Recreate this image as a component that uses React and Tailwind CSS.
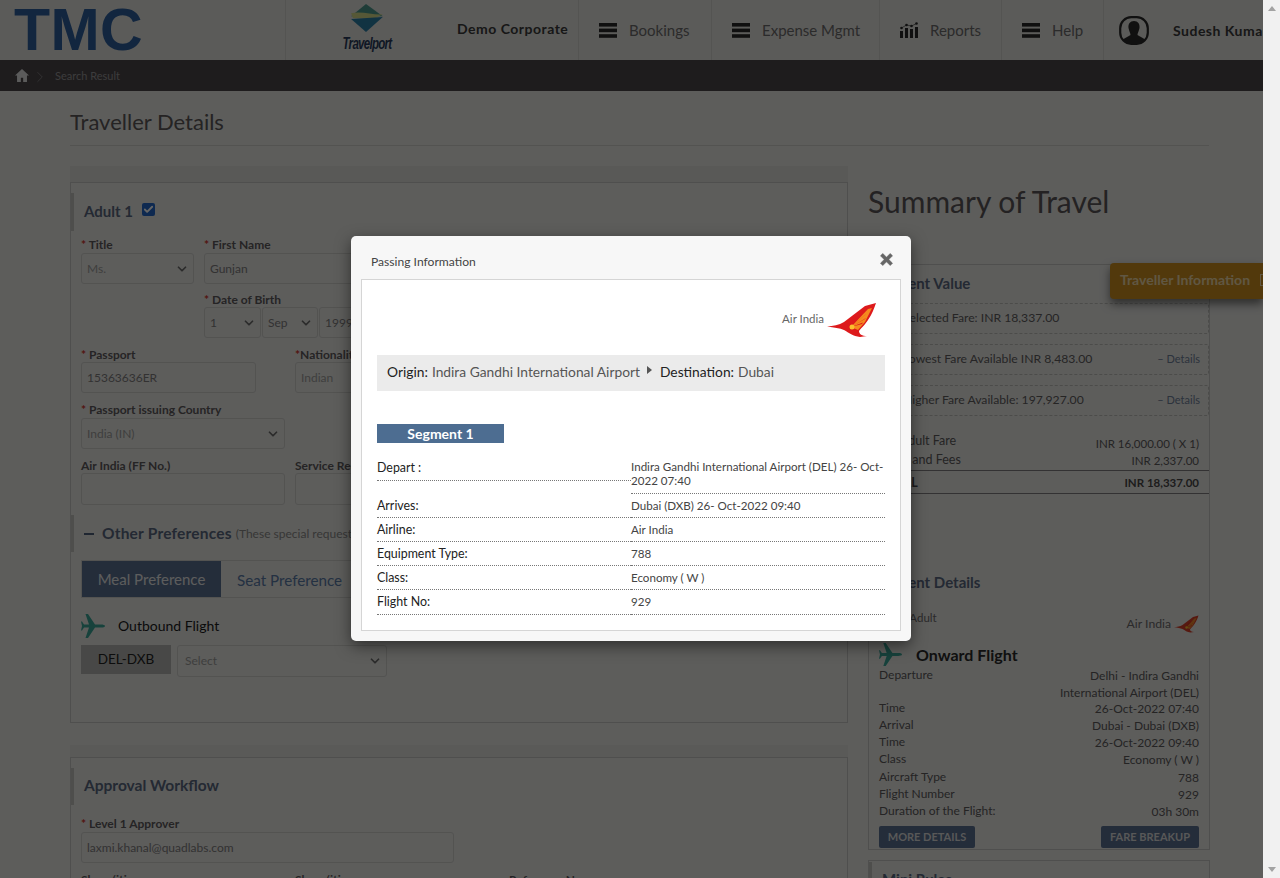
import React from "react";
import { Check, ChevronDown, ChevronRight } from "lucide-react";

const font = { fontFamily: "Lato, 'Noto Sans', sans-serif" };

function Wing({ className, faded }) {
  return (
    <svg viewBox="0 0 50 34" className={className}>
      <path d="M49 0 L38 3 L17 19 C12 22 6 23 0 23.5 C7 24.5 13 25 17 27 C22 30 26 33 33 34 L40 33 C35 33 32 31 32 28 C33 26 38 22 41 17 C45 11 47 6 49 0Z" fill={faded ? "#d8402a" : "#dd1a1c"} />
      <path d="M24 24 L41 6 L45 5 L38 19 L31 27Z" fill={faded ? "#ee8a2c" : "#f58a1f"} />
      <path d="M24 24 L33 12 L35 11Z M24 24 L38 12 L39 11Z M24 24 L38 16 L39 15Z M24 24 L35 21 L36 19.5Z M24 24 L29 15 L31 13Z" fill="#dd1a1c" />
      <circle cx="25" cy="24" r="2.5" fill="#fbc02d" />
    </svg>
  );
}

function PlaneIcon({ className }) {
  return (
    <svg viewBox="0 0 24 24" className={className} fill="#3aa596">
      <path d="M24 12 C24 11 22 10.5 20 10.5 H14 L7 0 H4.5 L8 10.5 H3 L1 7.5 H0 L1 12 L0 16.5 H1 L3 13.5 H8 L4.5 24 H7 L14 13.5 H20 C22 13.5 24 13 24 12Z" />
    </svg>
  );
}

function Bars() {
  return (
    <svg viewBox="0 0 18 15" className="h-[15px] w-[18px] shrink-0" fill="#2a2a2a">
      <rect width="18" height="3.6" y="0" />
      <rect width="18" height="3.6" y="5.6" />
      <rect width="18" height="3.6" y="11.2" />
    </svg>
  );
}

function NavCell({ w, icon, label }) {
  return (
    <div className={`${w} h-full shrink-0 flex items-center border-l border-[#d3d3ce] pl-5`}>
      {icon}
      <span className="ml-3 text-[15px] text-[#6d6b6c]">{label}</span>
    </div>
  );
}

function Label({ req, children, className = "" }) {
  return (
    <div className={`text-[12px] leading-[14px] font-bold text-[#5e5a5c] whitespace-nowrap ${className}`}>
      {req && <span className="text-[#d0332e]">* </span>}
      {children}
    </div>
  );
}

function Field({ className = "", value, select, faint }) {
  return (
    <div className={`h-[31px] shrink-0 rounded-[3px] border border-[#cfcfcb] flex items-center justify-between pl-[5px] pr-1 text-[12px] overflow-hidden ${faint ? "text-[#9c9c9a] pl-2" : "text-[#7f7d7e]"} ${className}`}>
      <span className="whitespace-nowrap">{value}</span>
      {select && <ChevronDown size={14} strokeWidth={3} className="text-[#6b6b6b] shrink-0" />}
    </div>
  );
}

function SideBar({ className, children }) {
  return <div className={`border-l-[3px] border-[#c3c3bf] flex items-center pl-[10px] ${className}`}>{children}</div>;
}

function Fare({ text, details }) {
  return (
    <div className="h-[31px] border border-dashed border-[#bdbdb9] rounded-[2px] flex items-center justify-between pl-[24px] pr-[8px] text-[12.2px] text-[#5f5d5e]">
      <span>{text}</span>
      {details && <span className="text-[11px] text-[#6f7f97]">– Details</span>}
    </div>
  );
}

function Kv({ k, v, h = "h-[17px]" }) {
  return (
    <div className={`${h} flex justify-between items-start leading-[16px] text-[12px] text-[#5c5a5b]`}>
      <span>{k}</span>
      <span className="mt-[1px]">{v}</span>
    </div>
  );
}

function Row({ k, v, first, last }) {
  const h = first ? "h-[34px] leading-[14px]" : last ? "h-[25px] leading-[23px]" : "h-[24px] leading-[23px]";
  return (
    <div className="grid grid-cols-2">
      <div className={`border-b border-dotted border-[#777] text-[12.4px] text-[#222] ${first ? "h-[21px] self-start leading-[15px]" : last ? "h-[25px] leading-[23px]" : "h-[24px] leading-[23px]"}`}>{k}</div>
      <div className={`border-b border-dotted border-[#777] text-[11.6px] text-[#444] ${h}`}>{v}</div>
    </div>
  );
}

export default function App() {
  return (
    <div style={font} className="flex w-[1280px] h-[878px] overflow-hidden bg-[#f1f1f1]">
      <main className="relative w-[1263px] h-[878px] overflow-hidden bg-[#e8e8e4] shrink-0">
        <header className="h-[60px] bg-[#e3e3de] flex items-center">
          <div className="w-[285px] h-full shrink-0 pl-[14px] flex items-center">
            <span className="text-[59px] leading-none font-bold tracking-[0.4px] text-[#2d5f9e]" style={{ fontFamily: "'Liberation Sans', sans-serif" }}>TMC</span>
          </div>
          <div className="w-[293px] h-full shrink-0 flex border-l border-[#d3d3ce]">
            <div className="w-[162px] shrink-0 flex flex-col items-center pt-[4px]">
              <svg viewBox="0 0 36 30" className="w-[36px] h-[28px] shrink-0 -ml-[2px]">
                <path d="M18 0 L36 13 L2 13Z" fill="#4e9a8d" />
                <path d="M2 10 C12 7 26 12 36 11 L26 16 L4 15Z" fill="#d6dc8a" />
                <path d="M2 16 L36 14 L18 30Z" fill="#2c7fa6" />
              </svg>
              <span className="italic font-bold text-[16px] leading-[20px] tracking-[-1px] text-[#2a3a5a] mt-[2px]" style={{ fontFamily: "'Liberation Sans', sans-serif", transform: "scaleX(.72)" }}>Travelport</span>
            </div>
            <div className="flex-1 pl-[9px] pt-[20px] text-[14px] leading-[17px] tracking-[0.5px] font-bold text-[#3a3a3a] whitespace-nowrap">Demo Corporate</div>
          </div>
          <NavCell w="w-[133px]" icon={<Bars />} label="Bookings" />
          <NavCell w="w-[168px]" icon={<Bars />} label="Expense Mgmt" />
          <NavCell w="w-[122px]" label="Reports" icon={
            <svg viewBox="0 0 18 16" className="h-[16px] w-[18px] shrink-0" fill="#2a2a2a">
              <rect x="0" y="9" width="3" height="7" /><rect x="5" y="6" width="3" height="10" /><rect x="10" y="7" width="3" height="9" /><rect x="15" y="5" width="3" height="11" />
              <circle cx="1.5" cy="6" r="1.3" /><circle cx="6.5" cy="3" r="1.3" /><circle cx="11.5" cy="4" r="1.3" /><circle cx="16.5" cy="1.5" r="1.3" />
              <path d="M1.5 6 L6.5 3 L11.5 4 L16.5 1.5" stroke="#2a2a2a" strokeWidth=".6" fill="none" />
            </svg>} />
          <NavCell w="w-[102px]" icon={<Bars />} label="Help" />
          <div className="flex-1 h-full flex items-center border-l border-[#d3d3ce] pl-[15px] overflow-hidden">
            <svg viewBox="0 0 30 29" className="w-[30px] h-[29px] shrink-0">
              <path d="M15 5 C11 5 9 8 9.5 12 C10 15 11.5 17 11.5 19 C9 21 5 22 3.5 24 C7 28 10 28 15 28 C20 28 23 28 26.5 24 C25 22 21 21 18.5 19 C18.5 17 20 15 20.5 12 C21 8 19 5 15 5Z" fill="#2a2a2a" />
              <rect x="1.2" y="1.2" width="27.6" height="26.6" rx="11" fill="none" stroke="#2a2a2a" strokeWidth="2.2" />
            </svg>
            <span className="ml-[24px] text-[14px] font-bold tracking-[0.5px] text-[#3a3a3a] whitespace-nowrap">Sudesh Kumar</span>
          </div>
        </header>

        <nav className="h-[31px] bg-[#4c484a] flex items-center pl-[15px] text-[11px] text-[#999798]">
          <svg viewBox="0 0 24 22" className="w-[14px] h-[13px] shrink-0" fill="#e4e4e4">
            <path d="M12 0 L0 11 H3.5 V22 H10 V15 H14 V22 H20.5 V11 H24Z" />
          </svg>
          <ChevronRight size={18} strokeWidth={1} className="ml-[2px] mt-[2px] text-[#88868a]" />
          <span className="ml-[6px] mt-[2px]">Search Result</span>
        </nav>

        <div className="ml-[70px] w-[1140px] flex flex-col">
          <div className="w-[1139px] flex flex-col">
            <h1 className="mt-[18px] h-[36px] text-[22px] leading-[26px] text-[#5c5859]">Traveller Details</h1>
            <div className="h-px bg-[#cfcfca]" />
          </div>

          <div className="flex mt-[20px] items-start">
            <div className="w-[778px] shrink-0 flex flex-col">
              <div className="h-[16px] bg-[#dededa]" />
              <section className="h-[541px] border border-[#c6c6c2] pt-[10px] pl-[10px] flex flex-col">
                <div className="-ml-[10px]">
                  <SideBar className="h-[38px] gap-[9px] pb-[2px]">
                    <span className="text-[15px] font-bold text-[#5a6880]">Adult 1</span>
                    <span className="w-[13px] h-[13px] bg-[#2568c8] rounded-[2px] flex items-center justify-center mb-[3px]">
                      <Check size={11} strokeWidth={4} className="text-white" />
                    </span>
                  </SideBar>
                </div>
                <div className="flex mt-[7px] gap-[10px]">
                  <div className="flex flex-col gap-px"><Label req>Title</Label><Field className="w-[113px]" faint value="Ms." select /></div>
                  <div className="flex flex-col gap-px"><Label req>First Name</Label><Field className="w-[300px]" value="Gunjan" /></div>
                </div>
                <div className="ml-[123px] mt-[9px]">
                  <Label req>Date of Birth</Label>
                  <div className="flex gap-px">
                    <Field className="w-[57px]" value="1" select />
                    <Field className="w-[56px]" value="Sep" select />
                    <Field className="w-[80px]" value="1999" />
                  </div>
                </div>
                <div className="flex mt-[10px]">
                  <div className="w-[214px] shrink-0"><Label req>Passport</Label><Field className="w-[175px]" value="15363636ER" /></div>
                  <div><Label><span className="text-[#d0332e]">*</span>Nationality</Label><Field className="w-[120px]" faint value="Indian" /></div>
                </div>
                <div className="mt-[10px]">
                  <Label req>Passport issuing Country</Label>
                  <Field className="w-[204px] mt-[1px]" faint value="India (IN)" select />
                </div>
                <div className="flex mt-[10px]">
                  <div className="w-[214px] shrink-0"><Label>Air India (FF No.)</Label><Field className="w-[204px] h-[32px]" value="" /></div>
                  <div><Label>Service Request</Label><Field className="w-[120px] h-[32px]" value="" /></div>
                </div>
                <div className="-ml-[10px] mt-[10px]">
                  <SideBar className="h-[37px] pl-[8px]">
                    <span className="w-[10px] h-[2px] bg-[#4e5f7a]" />
                    <span className="ml-[8px] text-[15.5px] tracking-[0.2px] font-bold text-[#5a6880] whitespace-nowrap">Other Preferences</span>
                    <span className="ml-1 text-[12px] text-[#8a8a88] whitespace-nowrap">(These special requests</span>
                  </SideBar>
                </div>
                <div className="mt-[8px] mr-[10px] h-[38px] border border-[#cfcfcb] flex items-center">
                  <div className="w-[139px] h-full bg-[#5a7191] text-[#e8e8e8] text-[15px] flex items-center justify-center">Meal Preference</div>
                  <div className="ml-[16px] mt-[3px] text-[15.2px] text-[#5a7aa6]">Seat Preference</div>
                </div>
                <div className="flex items-center mt-[16px] h-[24px]">
                  <PlaneIcon className="w-[24px] h-[24px] shrink-0" />
                  <span className="ml-[13px] mb-[1px] text-[14px] text-[#1a1a1a]">Outbound Flight</span>
                </div>
                <div className="flex mt-[7px] gap-[6px] items-start">
                  <div className="w-[90px] h-[29px] bg-[#b5b5b1] text-[13.5px] text-[#222] flex items-center justify-center">DEL-DXB</div>
                  <Field className="w-[210px] h-[32px] pl-[7px] text-[11px]" faint value="Select" select />
                </div>
              </section>
              <div className="h-[12px] mt-[22px] bg-[#e1e1dd]" />
              <section className="h-[200px] border border-[#c6c6c2] pt-[10px] pl-[10px] flex flex-col">
                <div className="-ml-[10px]">
                  <SideBar className="h-[37px] pb-[2px]"><span className="text-[15.5px] font-bold text-[#5a6880]">Approval Workflow</span></SideBar>
                </div>
                <Label req className="mt-[12px]">Level 1 Approver</Label>
                <Field className="w-[373px] mt-[1px]" value="laxmi.khanal@quadlabs.com" />
                <div className="flex mt-[10px]">
                  <Label className="w-[214px]">Show/itin</Label>
                  <Label className="w-[214px]">Show/itin</Label>
                  <Label>Reference No</Label>
                </div>
              </section>
            </div>

            <aside className="ml-[20px] w-[342px] shrink-0 flex flex-col">
              <h2 className="text-[30px] leading-[36px] text-[#5a5657] mt-[17px]">Summary of Travel</h2>
              <section className="mt-[45px] h-[586px] border border-[#c6c6c2] px-[10px] flex flex-col">
                <div className="h-[36px] mb-[2px] flex items-center text-[15px] font-bold text-[#5a6880]">Current Value</div>
                <div className="-mr-[10px] -ml-[1px] flex flex-col gap-[10px]">
                  <Fare text="Selected Fare: INR 18,337.00" />
                  <Fare text="Lowest Fare Available INR 8,483.00" details />
                  <Fare text="Higher Fare Available: 197,927.00" details />
                </div>
                <div className="mt-[18px] flex flex-col text-[12.5px] text-[#5c5a5b]">
                  <div className="h-[19px] flex justify-between items-start leading-[14px]">
                    <span>Per Adult Fare</span><span className="mt-[3px] text-[11.5px]">INR 16,000.00 ( X 1)</span>
                  </div>
                  <div className="h-[17px] flex justify-between items-start leading-[14px]">
                    <span>Taxes and Fees</span><span className="mt-[1px] text-[11.5px]">INR 2,337.00</span>
                  </div>
                </div>
                <div className="-mx-[10px] border-y border-[#807e7f] h-[24px] pt-[2px] flex items-center justify-between px-[10px] font-bold text-[#4a4849]">
                  <span className="text-[12.5px]">TOTAL</span><span className="text-[11.5px]">INR 18,337.00</span>
                </div>
                <div className="mt-[78px] text-[15px] font-bold text-[#5a6880] h-[20px] leading-[20px]">Current Details</div>
                <div className="flex justify-between items-start mt-[19px] h-[32px] text-[12.2px] leading-[14px] text-[#6c6a6b]">
                  <span className="text-[11.5px]">Pax 1 Adult</span>
                  <span className="flex items-center gap-[3px] mt-[4px]"><span className="mb-[1px]">Air India</span><Wing faded className="w-[25px] h-[18px]" /></span>
                </div>
                <div className="flex items-center h-[23px]">
                  <PlaneIcon className="w-[23px] h-[23px] shrink-0" />
                  <span className="ml-[14px] text-[16px] font-bold text-[#2a2a2a]">Onward Flight</span>
                </div>
                <div className="mt-[1px] flex justify-between text-[12px] leading-[16.5px] text-[#5c5a5b] h-[33px]">
                  <span>Departure</span>
                  <span className="text-right w-[146px] mt-[1px]">Delhi - Indira Gandhi International Airport (DEL)</span>
                </div>
                <Kv k="Time" v="26-Oct-2022 07:40" />
                <Kv k="Arrival" v="Dubai - Dubai (DXB)" />
                <Kv k="Time" v="26-Oct-2022 09:40" />
                <Kv k="Class" v="Economy ( W )" h="h-[18px]" />
                <Kv k="Aircraft Type" v="788" />
                <Kv k="Flight Number" v="929" />
                <Kv k="Duration of the Flight:" v="03h 30m" />
                <div className="flex justify-between mt-[6px]">
                  <div className="w-[96px] h-[22px] rounded-[2px] bg-[#5a7191] text-[11px] font-bold text-[#dcdcdc] flex items-center justify-center">MORE DETAILS</div>
                  <div className="w-[98px] h-[22px] rounded-[2px] bg-[#5a7191] text-[11px] font-bold text-[#dcdcdc] flex items-center justify-center">FARE BREAKUP</div>
                </div>
              </section>
              <section className="mt-[10px] h-[60px] border border-[#c6c6c2]">
                <SideBar className="h-[34px] mt-[1px]"><span className="text-[15px] font-bold text-[#5a6880]">Mini Rules</span></SideBar>
              </section>
            </aside>
          </div>
        </div>

        <div className="absolute right-0 top-[263px] w-[153px] h-[36px] rounded-l-[4px] bg-[#cc8f20] shadow-[0_5px_10px_rgba(0,0,0,0.5)] flex items-center pl-[10px] pb-[3px] text-[14px] font-bold text-[#f0d9a8] whitespace-nowrap overflow-hidden">
          Traveller Information
          <span className="ml-[10px] w-[10px] h-[12px] border border-[#f0d9a8] shrink-0" />
        </div>

        <div className="absolute inset-0 bg-black/60 flex justify-center items-start pt-[236px] pr-[1px]">
          <div className="w-[560px] h-[405px] rounded-[5px] bg-[#f7f7f7] px-[10px] shadow-[0_5px_15px_rgba(0,0,0,0.5)] flex flex-col">
            <div className="h-[43px] shrink-0 flex justify-between pl-[10px] pr-[8px] pt-[19px]">
              <span className="text-[12.1px] leading-[14px] text-[#444]">Passing Information</span>
              <svg viewBox="0 0 14 14" className="w-[13px] h-[13px] shrink-0 -mt-[2px]" fill="#666" stroke="#666" strokeWidth=".6" strokeLinejoin="round">
                <path d="M3 0.5 L7 4.5 L11 0.5 L13.5 3 L9.5 7 L13.5 11 L11 13.5 L7 9.5 L3 13.5 L0.5 11 L4.5 7 L0.5 3Z" />
              </svg>
            </div>
            <div className="h-[352px] bg-white border border-[#d5d5d5] px-[15px] flex flex-col">
              <div className="h-[75px] shrink-0 flex justify-end items-start pt-[23px] pr-[8px]">
                <span className="text-[11.5px] text-[#666] mr-[3px] mt-[7px]">Air India</span>
                <Wing className="w-[50px] h-[34px]" />
              </div>
              <div className="h-[36px] shrink-0 bg-[#ebebeb] flex items-center pl-[10px] pb-[2px] text-[13.8px] text-[#555] whitespace-nowrap">
                <span className="text-[#222]">Origin:</span>
                <span className="ml-1">Indira Gandhi International Airport</span>
                <span className="ml-[7px] mb-[4px] w-0 h-0 border-y-[4px] border-y-transparent border-l-[5px] border-l-[#555]" />
                <span className="ml-[8px] text-[#222]">Destination:</span>
                <span className="ml-1">Dubai</span>
              </div>
              <div className="mt-[33px] w-[127px] h-[19px] shrink-0 bg-[#4d6d91] text-white text-[14px] font-bold flex items-center justify-center">Segment 1</div>
              <div className="mt-[17px] flex flex-col">
                <Row first k="Depart :" v="Indira Gandhi International Airport (DEL) 26- Oct-2022 07:40" />
                <Row k="Arrives:" v="Dubai (DXB) 26- Oct-2022 09:40" />
                <Row k="Airline:" v="Air India" />
                <Row k="Equipment Type:" v="788" />
                <Row k="Class:" v="Economy ( W )" />
                <Row last k="Flight No:" v="929" />
              </div>
            </div>
          </div>
        </div>
      </main>
      <aside className="w-[17px] h-[878px] bg-[#f1f1f1] flex flex-col items-center justify-between py-[6px]">
        <span className="w-0 h-0 border-x-[4px] border-x-transparent border-b-[5px] border-b-[#a3a3a3]" />
        <span className="w-0 h-0 border-x-[4px] border-x-transparent border-t-[5px] border-t-[#a3a3a3]" />
      </aside>
    </div>
  );
}
